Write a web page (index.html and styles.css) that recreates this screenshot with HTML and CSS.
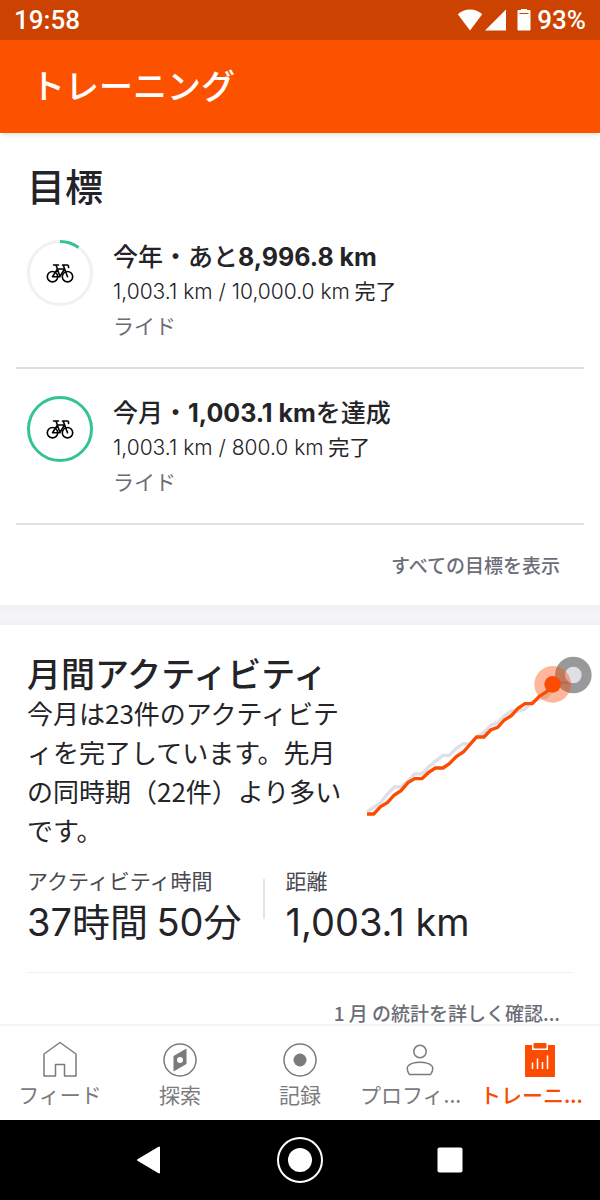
FILE: index.html
```html
<!DOCTYPE html>
<html lang="ja">
<head>
<meta charset="utf-8">
<meta name="viewport" content="width=device-width, initial-scale=1">
<title>トレーニング</title>
<link rel="stylesheet" href="styles.css">
</head>
<body>
<svg class="defs" aria-hidden="true">
  <symbol id="bike" viewBox="0 0 28 20">
    <g fill="none" stroke="#000" stroke-width="1.600" stroke-linejoin="round" stroke-linecap="round">
      <circle cx="6.500" cy="13.700" r="5.200"/>
      <circle cx="21.500" cy="13.700" r="5.200"/>
      <path d="M6.500 13.700 11.500 6H18.500L13.800 13.700H6.500M10 2 14 13.700M7.500 2H12.500M16.500 2H21Q23 2 22.500 4.500M17.200 2 21.500 13.700"/>
    </g>
  </symbol>
</svg>
<div class="status">
  <span>19:58</span>
  <span class="status-right">
    <svg width="26" height="22" viewBox="0 0 26 22"><path fill="#fff" d="M13 21.5.8 5.200Q6 .5 13 .5T25.200 5.200Z"/></svg>
    <svg width="21" height="22" viewBox="0 0 21 22"><path fill="#fff" d="M21 .5V21.500H0Z"/></svg>
    <svg class="battery" width="14" height="22" viewBox="0 0 14 22"><path fill="#fff" d="M4 0H10V1H12.500Q13.500 1 13.500 2V20.500Q13.500 21.500 12.500 21.500H1.500Q.5 21.500 .5 20.500V2Q.5 1 1.500 1H4Z"/><path stroke="#cc4200" d="M2.500 4.500H11.500"/></svg>
    <span>93%</span>
  </span>
</div>
<header class="appbar"><h1>トレーニング</h1></header>
<main class="content">
  <section class="goals">
    <h2 class="goals-title">目標</h2>
    <article class="goal">
      <div class="ring">
        <svg width="66" height="66" viewBox="0 0 66 66"><g fill="none" stroke-width="3"><circle cx="33" cy="33" r="31.500" stroke="#f0f0f5"/><path stroke="#33c491" d="M33 1.500A31.500 31.500 0 0 1 51.500 7.500"/></g><use href="#bike" x="19" y="23" width="28" height="20"/></svg>
      </div>
      <div class="goal-text">
        <h3>今年・あと<span class="num">8,996.8 km</span></h3>
        <p class="progress"><span class="num">1,003.1 km / 10,000.0 km</span> 完了</p>
        <p class="sport">ライド</p>
      </div>
    </article>
    <article class="goal">
      <div class="ring">
        <svg width="66" height="66" viewBox="0 0 66 66"><circle cx="33" cy="33" r="31.500" fill="none" stroke-width="3" stroke="#33c491"/><use href="#bike" x="19" y="23" width="28" height="20"/></svg>
      </div>
      <div class="goal-text">
        <h3>今月・<span class="num">1,003.1 km</span>を達成</h3>
        <p class="progress"><span class="num">1,003.1 km / 800.0 km</span> 完了</p>
        <p class="sport">ライド</p>
      </div>
    </article>
    <a class="more" href="#goals">すべての目標を表示</a>
  </section>
  <div class="band"></div>
  <section class="monthly">
    <div class="summary">
      <div class="summary-text">
        <h2>月間アクティビティ</h2>
        <p>今月は23件のアクティビティを完了しています。先月の同時期（22件）より多いです。</p>
      </div>
      <svg class="chart" width="240" height="170" viewBox="30 330 720 510" role="img" aria-label="今月と先月の比較">
        <path fill="none" stroke-width="10" stroke="#dfdfe8" d="M51 816 92 788 112 762 133 741H153L174 722 194 702H216L235 682 256 664 279 646H298L319 625 340 611H360L380 591 402 577 422 556 443 548 463 527 484 513H504L525 507 547 484 568 477 590 470 608 450 630 428H652L670 405"/>
        <circle cx="670" cy="405" r="55" fill="#000" fill-opacity=".4"/>
        <circle cx="670" cy="405" r="25" fill="#dfdfe8"/>
        <path fill="none" stroke="#fc4c02" stroke-width="10" d="M51 822H71L92 800 112 788 133 765 153 752 174 728 194 716H216L235 698 256 684H279L298 671 319 650 340 636 380 591H402L422 570 443 562 463 540 484 527 504 505 525 491H547L568 469 590 455 608 433"/>
        <circle cx="608" cy="433" r="55" fill="#fc4c02" fill-opacity=".4"/>
        <circle cx="608" cy="433" r="25" fill="#fc4c02"/>
      </svg>
    </div>
    <dl class="stats">
      <div class="stat"><dt>アクティビティ時間</dt><dd><span class="num">37</span>時間 <span class="num">50</span>分</dd></div>
      <div class="rule"></div>
      <div class="stat"><dt>距離</dt><dd><span class="num">1,003.1 km</span></dd></div>
    </dl>
    <a class="more" href="#stats">1 月 の統計を詳しく確認...</a>
  </section>
</main>
<nav class="tabs">
  <a href="#feed"><svg width="40" height="40" viewBox="0 0 40 40"><path fill="none" stroke="#7b7b7d" stroke-width="1.500" stroke-linejoin="round" d="M4 37V15L20 3.500 36 15V37H24.500V25.500H15.500V37Z"/></svg><span>フィード</span></a>
  <a href="#explore"><svg width="40" height="40" viewBox="0 0 40 40"><circle cx="20" cy="21" r="16" fill="none" stroke="#7b7b7d" stroke-width="1.500"/><path fill="#7b7b7d" fill-rule="evenodd" d="M13.500 17 26.500 9.500V25L13.500 32.500ZM20 18a3 3 0 1 0 0 6 3 3 0 0 0 0-6Z"/></svg><span>探索</span></a>
  <a href="#record"><svg width="40" height="40" viewBox="0 0 40 40"><circle cx="20" cy="21" r="16" fill="none" stroke="#7b7b7d" stroke-width="1.500"/><circle cx="20" cy="21" r="6.500" fill="#7b7b7d"/></svg><span>記録</span></a>
  <a href="#profile"><svg width="40" height="40" viewBox="0 0 40 40"><g fill="none" stroke="#7b7b7d" stroke-width="1.500"><circle cx="20" cy="12.500" r="6.200"/><path stroke-linejoin="round" d="M9.500 35.500C7 32.500 6.500 28 8.500 26.500 11 24 15.500 23.200 20 23.200S29 24 31.500 26.500C33.500 28 33 32.500 30.500 35.500Z"/></g></svg><span class="clipped">プロフィ...</span></a>
  <a class="active" href="#training" aria-current="page"><svg width="40" height="40" viewBox="0 0 40 40"><g fill="#fc4c02"><path d="M6 6H12V11H28V6H34Q35 6 35 7V37Q35 38 34 38H6Q5 38 5 37V7Q5 6 6 6Z"/><rect x="13.500" y="4" width="13" height="5.500" rx="1"/></g><path stroke="#fff" stroke-width="1.500" d="M12.500 23.500V30M17.500 19.500V30M22.500 23V30M27.500 16.500V30"/></svg><span class="clipped">トレーニ...</span></a>
</nav>
<div class="system">
  <button type="button" aria-label="戻る"><svg width="28" height="30" viewBox="0 0 28 30"><path fill="#fff" stroke="#fff" stroke-width="2" stroke-linejoin="round" d="M2 15 23 2.500V27.500Z"/></svg></button>
  <button type="button" aria-label="ホーム"><svg width="48" height="48" viewBox="0 0 48 48"><circle cx="24" cy="24" r="22" fill="none" stroke="#fff" stroke-width="2"/><circle cx="24" cy="24" r="12" fill="#fff"/></svg></button>
  <button type="button" aria-label="履歴"><svg width="26" height="26" viewBox="0 0 26 26"><rect x=".5" y=".5" width="25" height="25" rx="2" fill="#fff"/></svg></button>
</div>
</body>
</html>
```

FILE: styles.css
```css
* { box-sizing: border-box; }
h1, h2, h3, p, dl, dd { margin: 0; }
svg { display: block; flex: none; }
a { color: inherit; text-decoration: none; }

body {
  margin: 0;
  height: 100vh;
  display: flex;
  flex-direction: column;
  background: #fff;
  color: #242428;
  font-family: "Noto Sans CJK JP", sans-serif;
}
.defs { position: absolute; width: 0; height: 0; }
.num { font-family: Inter, "Noto Sans CJK JP", sans-serif; line-height: 1; }

.status {
  flex: none;
  height: 40px;
  padding: 0 14px;
  display: flex;
  align-items: center;
  justify-content: space-between;
  background: #cc4200;
  color: #fff;
  font: 500 26px/40px Roboto, sans-serif;
}
.status-right { display: flex; align-items: center; gap: 2px; }
.battery { margin: 0 4px 0 9px; }

.appbar {
  flex: none;
  height: 93px;
  padding: 0 31px;
  background: #fc5200;
  color: #fff;
  box-shadow: 0 4px 4px -2px rgba(0, 0, 0, .12);
  z-index: 1;
}
.appbar h1 { font-size: 34px; font-weight: 500; line-height: 89px; }

.content { flex: 1; min-height: 0; overflow: hidden; }

.goals { padding: 25px 16px 0; }
.goals-title { padding: 0 0 2px 11px; font-size: 38px; font-weight: 500; line-height: 53px; }
.goal {
  display: flex;
  gap: 20px;
  padding: 25px 11px;
  border-bottom: 2px solid #dfdfe8;
}
.ring { margin-top: 2px; }
.goal h3 { font-size: 25px; font-weight: 500; line-height: 35px; }
.goal h3 .num { font-weight: 700; }
.progress { font-size: 21px; line-height: 35px; }
.progress .num { font-weight: 300; }
.sport { font-size: 21px; line-height: 34px; color: #6d6d78; }

.more {
  display: block;
  padding-right: 24px;
  text-align: right;
  font-size: 19px;
  font-weight: 500;
  line-height: 80px;
  color: #6d6d78;
}
.band { height: 20px; background: linear-gradient(#f0f0f5, #f5f5fa 60%, #f0f0f5); }

.monthly { padding: 25px 27px 0; }
.summary { display: flex; justify-content: space-between; margin-right: -27px; }
.summary-text { flex: 0 0 320px; padding-top: 2px; }
.summary h2 { font-size: 34px; font-weight: 500; line-height: 41px; white-space: nowrap; }
.summary p { font-size: 26px; line-height: 39px; line-break: anywhere; }
.chart { margin-left: 13px; }
.stats { display: flex; gap: 21px; padding: 15px 0 28px; border-bottom: 1px solid #f0f0f5; }
.stat dt { font-size: 21px; line-height: 32px; color: #494950; }
.stat dd { font-size: 38px; line-height: 48px; }
.rule { width: 2px; height: 40px; margin-top: 15px; background: #e4e4e8; }
.monthly .more { padding-right: 13px; }

.tabs {
  flex: none;
  height: 96px;
  padding-top: 13px;
  border-top: 2px solid #f5f5f5;
  display: grid;
  grid-template-columns: repeat(5, 1fr);
  background: #fff;
  color: #7b7b7d;
  z-index: 1;
}
.tabs a {
  display: flex;
  flex-direction: column;
  align-items: center;
  font-size: 21px;
  line-height: 30px;
  white-space: nowrap;
}
.tabs .clipped { align-self: stretch; }
.tabs .active { color: #fc4c02; font-weight: 500; }

.system {
  flex: none;
  height: 80px;
  padding: 0 75px;
  display: grid;
  grid-template-columns: repeat(3, 1fr);
  background: #000;
}
.system button {
  display: flex;
  align-items: center;
  justify-content: center;
  padding: 0;
  border: 0;
  background: none;
}
```
